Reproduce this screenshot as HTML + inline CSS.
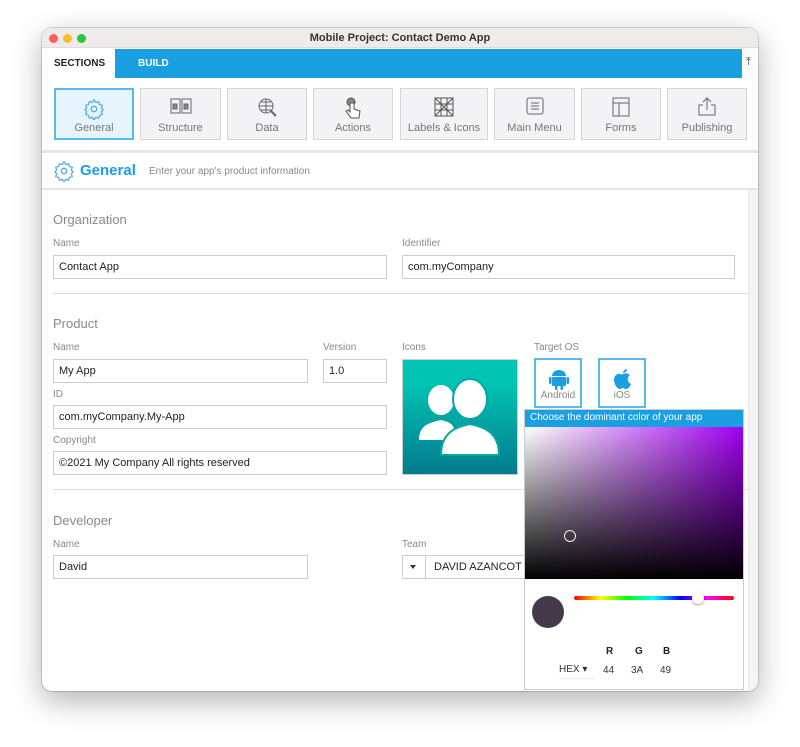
<!DOCTYPE html>
<html><head><style>
*{box-sizing:border-box;margin:0;padding:0}
body{width:800px;height:747px;background:#fff;font-family:"Liberation Sans",sans-serif;position:relative;overflow:hidden}
.a{position:absolute}
.win{left:42px;top:28px;width:716px;height:663px;border-radius:10px;background:#fff;box-shadow:0 10px 30px rgba(0,0,0,.3),0 0 0 1px rgba(0,0,0,.15);overflow:hidden}
.btn{top:60px;height:52px;background:#f3f3f5;border:1px solid #d6d6d6;font-size:11px;color:#777;text-align:center}
.btn span{position:absolute;left:0;right:0;top:33px}
.btn svg{position:absolute;left:50%;top:8px;transform:translateX(-50%)}
.lbl{font-size:10px;color:#888}
.h{font-size:13px;color:#888}
.in{height:24px;border:1px solid #ccc;font-size:11px;color:#222;padding:5px 5px}
.hr{height:1px;background:#ddd}
</style></head><body>
<div class="a win">
 <div class="a" style="left:0;top:0;width:716px;height:20px;background:#efebeb;border-bottom:1px solid #ddd"></div>
 <div class="a" style="left:7px;top:6px;width:9px;height:9px;border-radius:50%;background:#fe5f57"></div>
 <div class="a" style="left:21px;top:6px;width:9px;height:9px;border-radius:50%;background:#febc2e"></div>
 <div class="a" style="left:35px;top:6px;width:9px;height:9px;border-radius:50%;background:#28c840"></div>
 <div class="a" style="left:0;right:0;top:4px;text-align:center;font-size:11px;font-weight:bold;color:#333">Mobile Project: Contact Demo App</div>
 <div class="a" style="left:12px;top:30px;font-size:10px;font-weight:bold;color:#222">SECTIONS</div>
 <div class="a" style="left:73px;top:21px;width:627px;height:29px;background:#1a9fe3"></div>
 <div class="a" style="left:96px;top:30px;font-size:10px;font-weight:bold;color:#fff">BUILD</div>
 <div class="a" style="left:704px;top:28px;font-size:11px;color:#333">&#x2912;</div>

 <div class="a btn" style="left:12px;width:80px;background:#e6f4fd;border:2px solid #5ab8ee"><svg width="22" height="22" viewBox="0 0 24 24" fill="none" stroke="#4aa8e6" stroke-width="1.3"><circle cx="12" cy="12" r="3"/><path d="M12 2l2 3 3-1 1 3 3 1-1 3 2 2-2 2 1 3-3 1-1 3-3-1-2 3-2-3-3 1-1-3-3-1 1-3-2-2 2-2-1-3 3-1 1-3 3 1z"/></svg><span style="top:32px">General</span></div>
 <div class="a btn" style="left:98px;width:81px"><svg width="22" height="18" viewBox="0 0 22 18" fill="none" stroke="#666"><rect x="1" y="2" width="9" height="14"/><rect x="12" y="2" width="9" height="14"/><rect x="3" y="7" width="4" height="5" fill="#888"/><rect x="14" y="7" width="4" height="5" fill="#888"/></svg><span>Structure</span></div>
 <div class="a btn" style="left:185px;width:80px"><svg width="20" height="20" viewBox="0 0 20 20" fill="none" stroke="#666"><circle cx="9" cy="9" r="7"/><path d="M2 9h14M9 2v14M4 5h10M4 13h10"/><path d="M14 14l5 5" stroke-width="2"/></svg><span>Data</span></div>
 <div class="a btn" style="left:271px;width:80px"><svg width="18" height="22" viewBox="0 0 18 22" fill="none" stroke="#555"><circle cx="7" cy="5" r="4" fill="#888"/><path d="M6 6v9l-2-2-2 1 5 7h8l1-7-6-2V6z" fill="#fff"/></svg><span>Actions</span></div>
 <div class="a btn" style="left:358px;width:88px"><svg width="20" height="20" viewBox="0 0 20 20" fill="none" stroke="#555"><rect x="1" y="1" width="18" height="18"/><path d="M1 1l18 18M19 1L1 19M7 1v18M13 1v18M1 7h18M1 13h18"/></svg><span>Labels &amp; Icons</span></div>
 <div class="a btn" style="left:452px;width:81px"><svg width="18" height="18" viewBox="0 0 18 18" fill="none" stroke="#666"><rect x="1" y="1" width="16" height="16" rx="2"/><path d="M5 6h8M5 9h8M5 12h8"/></svg><span>Main Menu</span></div>
 <div class="a btn" style="left:539px;width:80px"><svg width="18" height="20" viewBox="0 0 18 20" fill="none" stroke="#666"><rect x="1" y="1" width="16" height="18"/><path d="M1 6h16M7 6v13"/></svg><span>Forms</span></div>
 <div class="a btn" style="left:625px;width:80px"><svg width="20" height="20" viewBox="0 0 20 20" fill="none" stroke="#666"><path d="M6 8H2v10h16V8h-4M10 13V1M6 5l4-4 4 4"/></svg><span>Publishing</span></div>

 <div class="a" style="left:0;top:122px;width:716px;height:3px;background:#e6e6e6"></div>
 <svg class="a" style="left:11px;top:132px" width="22" height="22" viewBox="0 0 24 24" fill="none" stroke="#4aa8e6" stroke-width="1.3"><circle cx="12" cy="12" r="3"/><path d="M12 2l2 3 3-1 1 3 3 1-1 3 2 2-2 2 1 3-3 1-1 3-3-1-2 3-2-3-3 1-1-3-3-1 1-3-2-2 2-2-1-3 3-1 1-3 3 1z"/></svg>
 <div class="a" style="left:38px;top:134px;font-size:15px;font-weight:bold;color:#1a9fe3">General</div>
 <div class="a" style="left:107px;top:138px;font-size:10px;color:#888">Enter your app's product information</div>
 <div class="a" style="left:0;top:160px;width:716px;height:2px;background:#e6e6e6"></div>
 <div class="a" style="left:706px;top:162px;width:10px;height:501px;background:#f4f4f4;border-left:1px solid #e6e6e6"></div>

 <div class="a h" style="left:11px;top:184px">Organization</div>
 <div class="a lbl" style="left:11px;top:210px">Name</div>
 <div class="a in" style="left:11px;top:227px;width:334px">Contact App</div>
 <div class="a lbl" style="left:360px;top:210px">Identifier</div>
 <div class="a in" style="left:360px;top:227px;width:333px">com.myCompany</div>
 <div class="a hr" style="left:11px;top:265px;width:695px"></div>

 <div class="a h" style="left:11px;top:288px">Product</div>
 <div class="a lbl" style="left:11px;top:314px">Name</div>
 <div class="a in" style="left:11px;top:331px;width:255px">My App</div>
 <div class="a lbl" style="left:281px;top:314px">Version</div>
 <div class="a in" style="left:281px;top:331px;width:64px">1.0</div>
 <div class="a lbl" style="left:11px;top:361px">ID</div>
 <div class="a in" style="left:11px;top:377px;width:334px">com.myCompany.My-App</div>
 <div class="a lbl" style="left:11px;top:407px">Copyright</div>
 <div class="a in" style="left:11px;top:423px;width:334px">©2021 My Company All rights reserved</div>
 <div class="a lbl" style="left:360px;top:314px">Icons</div>
 <div class="a" style="left:360px;top:331px;width:116px;height:116px;background:linear-gradient(#02c4b2 20%,#027a8e);border:1px solid #ccc;overflow:hidden">
  <svg width="116" height="116" viewBox="0 0 116 116" fill="#fff"><ellipse cx="38" cy="40" rx="13" ry="15"/><path d="M16 80c0-15 10-17 22-20 12 3 14 5 14 20z"/><ellipse cx="67" cy="39" rx="17" ry="20" stroke="#04a6a8" stroke-width="2"/><path d="M38 95c0-22 14-28 29-31 15 3 29 9 29 31z" stroke="#04a6a8" stroke-width="2"/></svg></div>
 <div class="a lbl" style="left:492px;top:314px">Target OS</div>
 <div class="a" style="left:492px;top:330px;width:48px;height:50px;border:2px solid #5ab8ee;font-size:10px;color:#888;text-align:center;padding-top:30px">Android
  <svg class="a" style="left:13px;top:8px" width="20" height="22" viewBox="0 0 20 22" fill="#1a9fe3"><path d="M3 8a7 6 0 0 1 14 0z"/><rect x="3" y="9" width="14" height="9" rx="1"/><rect x="0" y="9" width="2.5" height="7" rx="1"/><rect x="17.5" y="9" width="2.5" height="7" rx="1"/><rect x="6" y="17" width="2.5" height="5" rx="1"/><rect x="11.5" y="17" width="2.5" height="5" rx="1"/></svg></div>
 <div class="a" style="left:556px;top:330px;width:48px;height:50px;border:2px solid #5ab8ee;font-size:10px;color:#888;text-align:center;padding-top:30px">iOS
  <svg class="a" style="left:13px;top:8px" width="20" height="22" viewBox="0 0 20 22" fill="#1a9fe3"><path d="M10 6c2-1 5-1 7 1-3 2-3 7 1 9-1 3-3 5-5 5-2 0-2-1-3-1s-2 1-3 1C4 21 1 16 1 12c0-5 4-7 6-6 1 0 2 1 3 0z"/><path d="M10 5c0-2 2-4 4-4 0 2-2 4-4 4z"/></svg></div>
 <div class="a hr" style="left:11px;top:461px;width:695px"></div>

 <div class="a h" style="left:11px;top:485px">Developer</div>
 <div class="a lbl" style="left:11px;top:511px">Name</div>
 <div class="a in" style="left:11px;top:527px;width:255px">David</div>
 <div class="a lbl" style="left:360px;top:511px">Team</div>
 <div class="a in" style="left:360px;top:527px;width:130px;padding-left:31px">DAVID AZANCOT</div>
 <div class="a" style="left:383px;top:527px;width:1px;height:24px;background:#ccc"></div>
 <div class="a" style="left:368px;top:537px;border:3.5px solid transparent;border-top:4px solid #333"></div>

 <div class="a" style="left:482px;top:381px;width:220px;height:281px;background:#fff;border:1px solid #ccc">
  <div class="a" style="left:0;top:0;width:218px;height:17px;background:#1a9fe3;color:#fff;font-size:10px;padding:2px 5px">Choose the dominant color of your app</div>
  <div class="a" style="left:0;top:17px;width:218px;height:152px;background:linear-gradient(to top,#000,transparent),linear-gradient(to right,#fff,#a000f0)"></div>
  <div class="a" style="left:39px;top:120px;width:12px;height:12px;border-radius:50%;border:1px solid #eee"></div>
  <div class="a" style="left:7px;top:186px;width:32px;height:32px;border-radius:50%;background:#443a49"></div>
  <div class="a" style="left:49px;top:186px;width:160px;height:4px;border-radius:2px;background:linear-gradient(to right,red,#ff0,#0f0,#0ff,#00f,#f0f,red)"></div>
  <div class="a" style="left:167px;top:182px;width:12px;height:12px;border-radius:50%;background:#fff;box-shadow:0 1px 2px rgba(0,0,0,.4)"></div>
  <div class="a" style="left:81px;top:236px;font-size:10px;font-weight:bold;color:#222">R</div>
  <div class="a" style="left:110px;top:236px;font-size:10px;font-weight:bold;color:#222">G</div>
  <div class="a" style="left:138px;top:236px;font-size:10px;font-weight:bold;color:#222">B</div>
  <div class="a" style="left:34px;top:254px;width:36px;font-size:10px;color:#333;border-bottom:1px solid #eee;padding-bottom:3px">HEX ▾</div>
  <div class="a" style="left:78px;top:255px;font-size:10px;color:#333">44</div>
  <div class="a" style="left:106px;top:255px;font-size:10px;color:#333">3A</div>
  <div class="a" style="left:135px;top:255px;font-size:10px;color:#333">49</div>
 </div>
</div>
</body></html>
